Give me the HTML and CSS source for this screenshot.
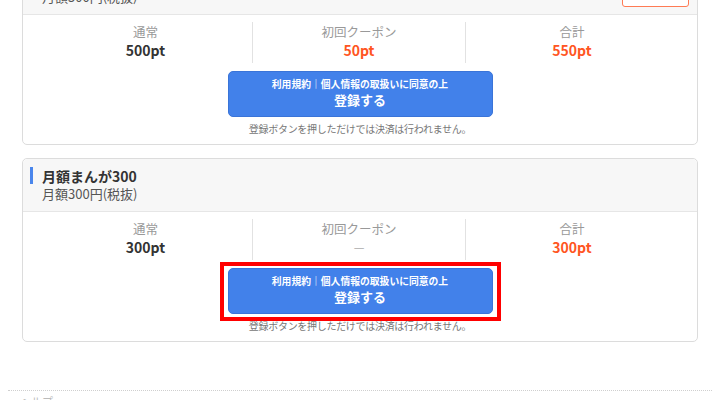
FILE: index.html
```html
<!DOCTYPE html>
<html lang="ja">
<head>
<meta charset="utf-8">
<title>プラン登録</title>
<link rel="stylesheet" href="styles.css">
</head>
<body>
<div class="page">
  <div class="plans">
    <section class="plan">
      <header class="plan-head">
        <div class="plan-titles">
          <h2 class="plan-name">月額まんが500</h2>
          <p class="plan-price">月額500円(税抜)</p>
        </div>
        <a class="plan-action">詳細を見る</a>
      </header>
      <div class="plan-body">
        <div class="points">
          <div class="point"><span class="point-label">通常</span><span class="point-value">500pt</span></div>
          <div class="point"><span class="point-label">初回クーポン</span><span class="point-value accent">50pt</span></div>
          <div class="point"><span class="point-label">合計</span><span class="point-value accent">550pt</span></div>
        </div>
        <div class="cta">
          <button class="register"><span class="register-sub">利用規約｜個人情報の取扱いに同意の上</span><span class="register-main">登録する</span></button>
        </div>
        <p class="note">登録ボタンを押しただけでは決済は行われません。</p>
      </div>
    </section>

    <section class="plan">
      <header class="plan-head">
        <div class="plan-titles">
          <h2 class="plan-name">月額まんが300</h2>
          <p class="plan-price">月額300円(税抜)</p>
        </div>
      </header>
      <div class="plan-body">
        <div class="points">
          <div class="point"><span class="point-label">通常</span><span class="point-value">300pt</span></div>
          <div class="point"><span class="point-label">初回クーポン</span><span class="point-value none">—</span></div>
          <div class="point"><span class="point-label">合計</span><span class="point-value accent">300pt</span></div>
        </div>
        <div class="cta">
          <button class="register highlighted"><span class="register-sub">利用規約｜個人情報の取扱いに同意の上</span><span class="register-main">登録する</span></button>
        </div>
        <p class="note">登録ボタンを押しただけでは決済は行われません。</p>
      </div>
    </section>
  </div>
  <footer class="footer">
    <p class="footer-text">ヘルプ</p>
  </footer>
</div>
</body>
</html>
```
FILE: styles.css
```css
* { box-sizing: border-box; }
html, body { margin: 0; padding: 0; background: #fff; }
body {
  font-family: "Noto Sans CJK JP", "Noto Sans", sans-serif;
  color: #333;
  overflow: hidden;
}
.page { width: 720px; }
.plans {
  margin-top: -39px;
  padding: 0 22px;
  display: flex;
  flex-direction: column;
  gap: 13px;
}
.plan {
  border: 1px solid #dcdcdc;
  border-radius: 5px;
  background: #fff;
}
.plan-head {
  height: 53px;
  background: #f7f7f7;
  border-bottom: 1px solid #e6e6e6;
  border-radius: 5px 5px 0 0;
  padding: 6px 8px 8px 7px;
  display: flex;
  justify-content: space-between;
  align-items: flex-end;
}
.plan-titles { display: flex; flex-direction: column; align-self: flex-start; }
.plan-name {
  margin: 2px 0 0;
  font-size: 14px;
  line-height: 18px;
  font-weight: 700;
  color: #333;
  padding-left: 9px;
  border-left: 3px solid #4a86ec;
  height: 17px;
  display: flex;
  align-items: center;
}
.plan-price {
  margin: 1px 0 0;
  padding-left: 12px;
  font-size: 13px;
  line-height: 18px;
  color: #555;
}
.plan-action {
  width: 67px;
  height: 28px;
  border: 1px solid #ff7b54;
  border-radius: 3px;
  background: #fff;
  color: #ff5a26;
  font-size: 12px;
  line-height: 26px;
  text-align: center;
  margin-bottom: -1px;
}
.plan-body { padding: 7px 19px 7px 16px; }
.points { display: grid; grid-template-columns: repeat(3, 1fr); }
.point {
  display: flex;
  flex-direction: column;
  align-items: center;
  padding: 1px 0 4px;
}
.point + .point { border-left: 1px solid #e2e2e2; }
.point-label { font-size: 12.5px; line-height: 18px; color: #999; }
.point-value { font-size: 14px; line-height: 18px; font-weight: 700; color: #333; }
.point-value.accent { color: #ff5522; }
.point-value.none { color: #aaa; font-weight: 400; font-size: 12px; }
.cta { display: flex; justify-content: center; margin-top: 8px; padding-left: 3px; }
.register {
  position: relative;
  width: 265px;
  height: 46px;
  padding: 6px 0 9px;
  border: 1px solid #3a74d8;
  border-radius: 5px;
  background: #4281ea;
  color: #fff;
  font-family: inherit;
  display: flex;
  flex-direction: column;
  align-items: center;
  cursor: pointer;
}
.register-sub { font-size: 9.8px; line-height: 13px; font-weight: 700; }
.register-main { font-size: 13px; line-height: 17px; font-weight: 700; }
.highlighted::after {
  content: "";
  position: absolute;
  top: -7px;
  bottom: -8px;
  left: -9px;
  right: -9px;
  border: 4px solid #ff0000;
  z-index: 2;
}
.note {
  margin: 4px 0 0;
  padding-left: 3px;
  text-align: center;
  font-size: 10px;
  line-height: 16px;
  color: #777;
  letter-spacing: -0.3px;
}
.footer {
  margin: 48px 8px 0;
  border-top: 1px dotted #cfcfcf;
  padding: 3px 12px 0;
}
.footer-text { margin: 0; font-size: 11px; line-height: 14px; color: #bbb; }
```
